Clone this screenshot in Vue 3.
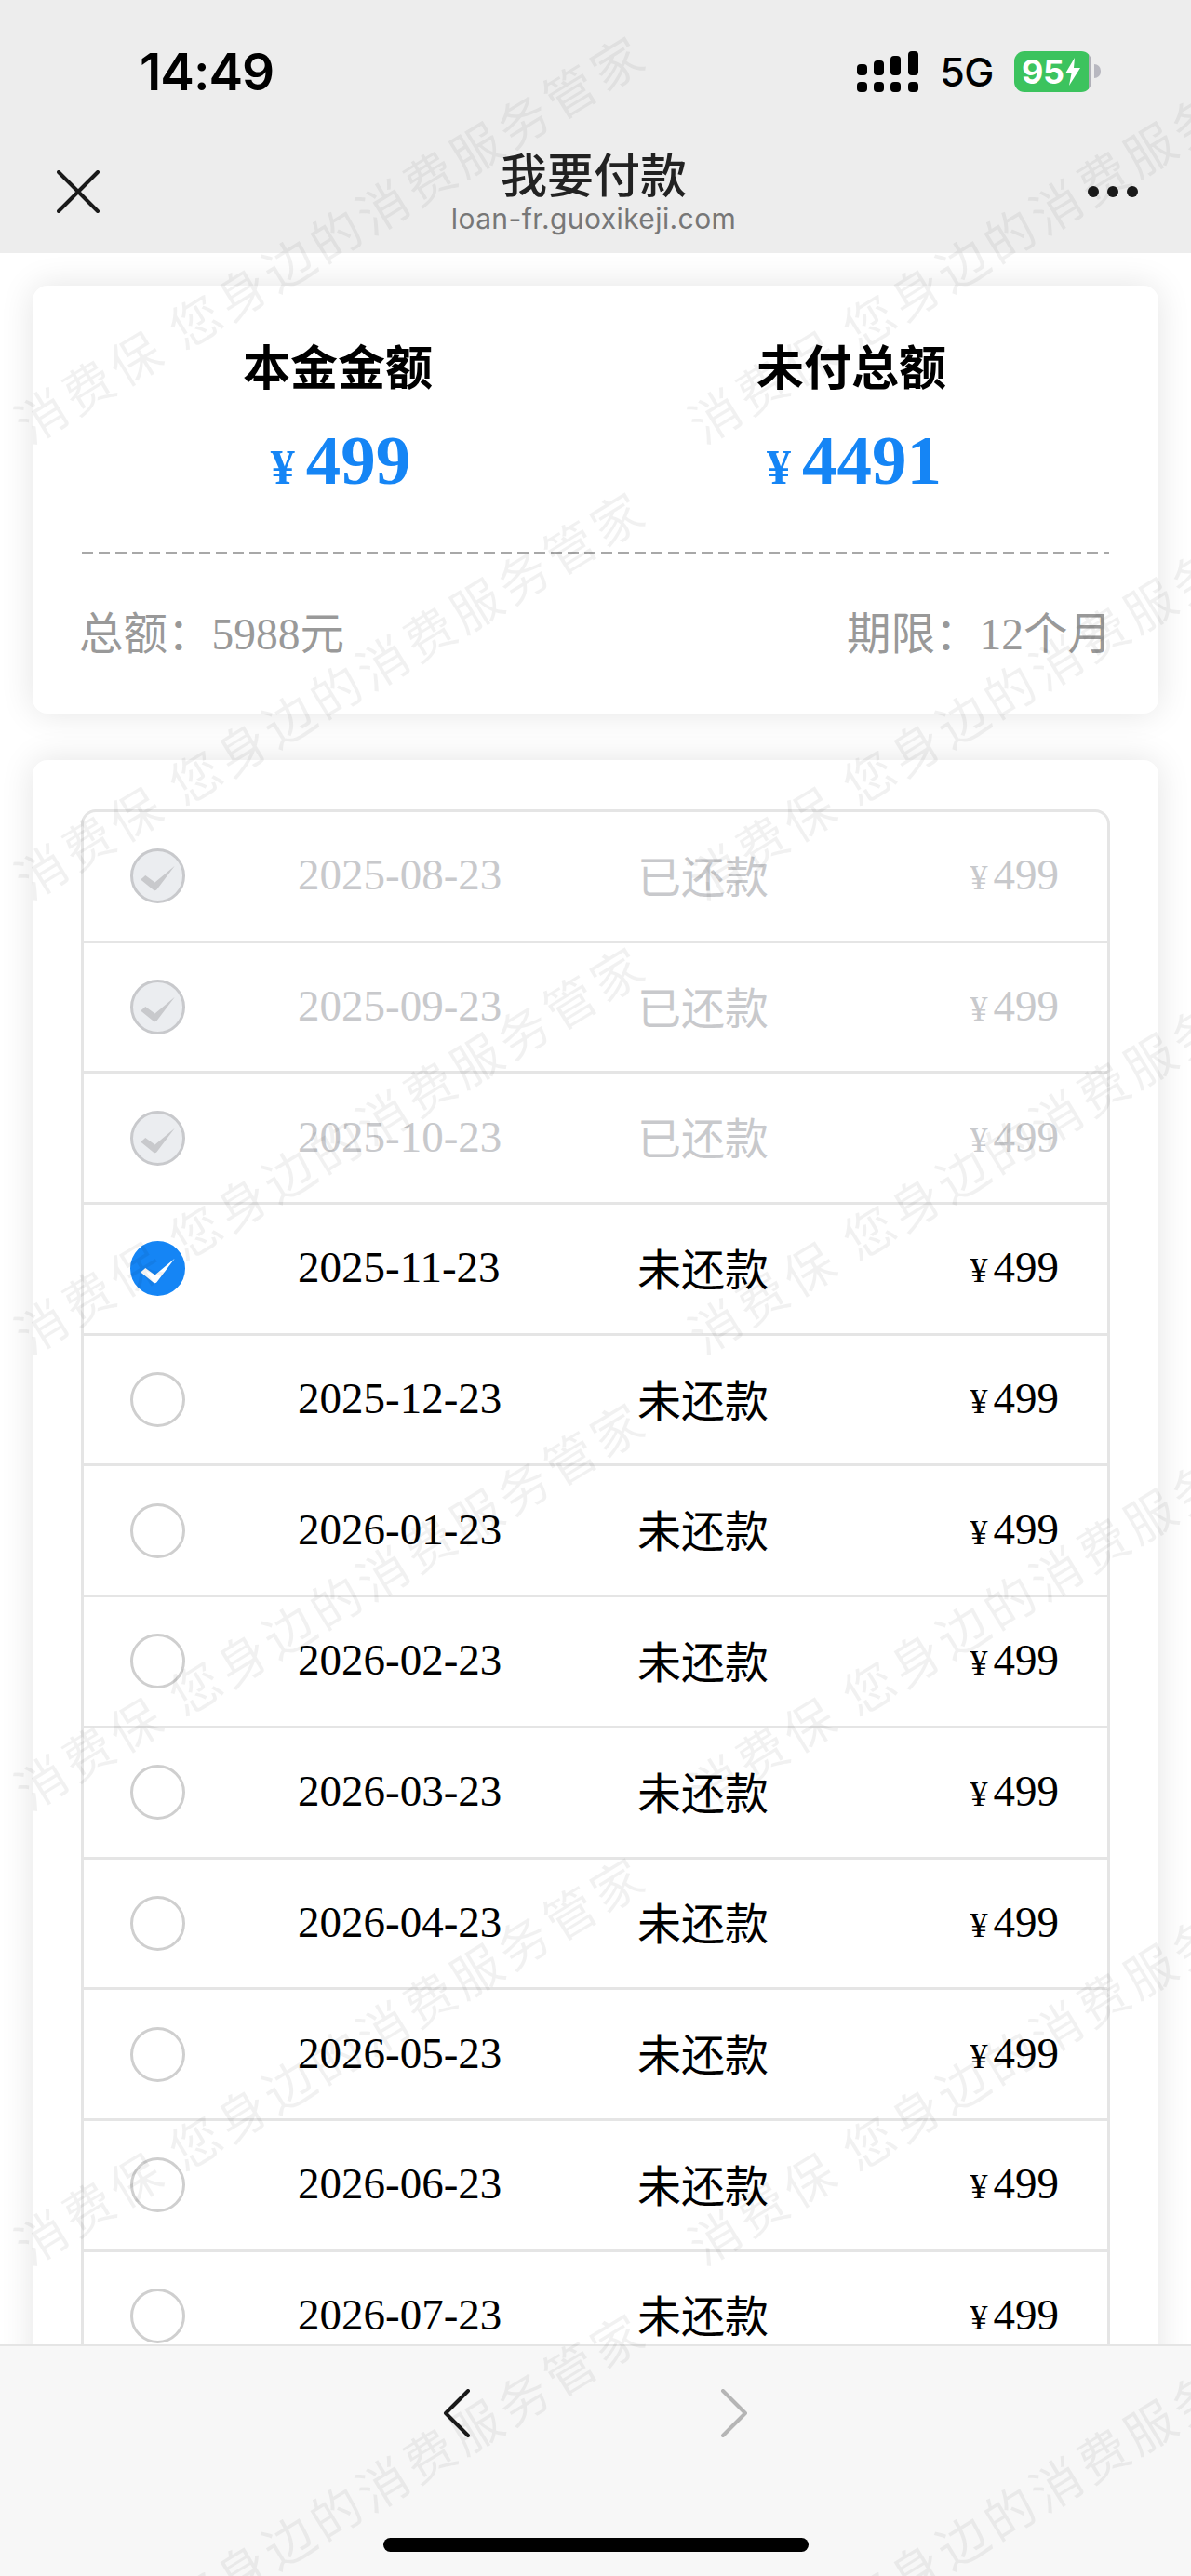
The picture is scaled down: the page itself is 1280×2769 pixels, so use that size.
<template>
  <div class="page">
    <header class="top">
      <div class="status">
        <span class="time">14:49</span>
        <div class="status-right">
          <svg class="signal" width="66" height="44" viewBox="0 0 66 44">
            <g fill="#000">
              <rect x="0" y="14" width="11" height="12" rx="4" />
              <rect x="18" y="10" width="11" height="16" rx="4" />
              <rect x="36" y="5" width="11" height="21" rx="4" />
              <rect x="55" y="0" width="11" height="26" rx="4" />
              <rect x="0" y="33" width="11" height="11" rx="4" />
              <rect x="18" y="33" width="11" height="11" rx="4" />
              <rect x="36" y="33" width="11" height="11" rx="4" />
              <rect x="55" y="33" width="11" height="11" rx="4" />
            </g>
          </svg>
          <span class="net">5G</span>
          <div class="battery">
            <span class="battery-num">95</span>
            <svg class="bolt" width="18" height="30" viewBox="0 0 18 30">
              <path d="M11 0 L1 17 H7.5 L5 30 L17 11 H10 Z" fill="#fff" />
            </svg>
          </div>
          <span class="battery-nub"></span>
        </div>
      </div>
      <div class="nav">
        <svg class="nav-close" width="46" height="46" viewBox="0 0 46 46">
          <path d="M2 2 L44 44 M44 2 L2 44" stroke="#1a1a1a" stroke-width="4" stroke-linecap="round" />
        </svg>
        <div class="nav-title">
          <div class="title">我要付款</div>
          <div class="domain">loan-fr.guoxikeji.com</div>
        </div>
        <div class="nav-more">
          <i></i><i></i><i></i>
        </div>
      </div>
    </header>

    <main class="content">
      <section class="card summary">
        <div class="amounts">
          <div class="amount" v-for="item in amounts" :key="item.label">
            <div class="amount-label">{{ item.label }}</div>
            <div class="amount-value"><span class="yen">¥</span>{{ item.value }}</div>
          </div>
        </div>
        <div class="dash"></div>
        <div class="meta">
          <span>总额：5988元</span>
          <span>期限：12个月</span>
        </div>
      </section>

      <section class="card plan">
        <div class="table">
          <div
            class="row"
            v-for="row in rows"
            :key="row.date"
            :class="{ paid: row.state === 'paid' }"
          >
            <span class="check" :class="row.state">
              <svg v-if="row.state !== 'empty'" width="59" height="59" viewBox="0 0 58 58">
                <path d="M11 33 L16 28.5 L26 36 L47 18.5 L28 43.5 Q26 45.5 24 43.5 Z" />
              </svg>
            </span>
            <span class="date">{{ row.date }}</span>
            <span class="state">{{ row.state === 'paid' ? '已还款' : '未还款' }}</span>
            <span class="price"><span class="price-yen">¥</span>499</span>
          </div>
        </div>
      </section>
    </main>

    <footer class="bottom">
      <div class="arrows">
        <svg width="30" height="52" viewBox="0 0 30 52">
          <path d="M27 2 L3 26 L27 50" fill="none" stroke="#1a1a1a" stroke-width="4" stroke-linecap="round" stroke-linejoin="round" />
        </svg>
        <svg width="30" height="52" viewBox="0 0 30 52">
          <path d="M3 2 L27 26 L3 50" fill="none" stroke="#b5b5b5" stroke-width="4" stroke-linecap="round" stroke-linejoin="round" />
        </svg>
      </div>
      <div class="home-bar"></div>
    </footer>

    <div class="watermarks">
      <span
        class="mark"
        v-for="mark in marks"
        :key="mark.id"
        :style="{ left: mark.x + 'px', top: mark.y + 'px' }"
      >消费保  您身边的消费服务管家</span>
    </div>
  </div>
</template>

<script setup>
const amounts = [
  { label: "本金金额", value: "499" },
  { label: "未付总额", value: "4491" },
];

const dates = [
  "2025-08-23",
  "2025-09-23",
  "2025-10-23",
  "2025-11-23",
  "2025-12-23",
  "2026-01-23",
  "2026-02-23",
  "2026-03-23",
  "2026-04-23",
  "2026-05-23",
  "2026-06-23",
  "2026-07-23",
];

const rows = dates.map((date, index) => ({
  date,
  state: index < 3 ? "paid" : index === 3 ? "active" : "empty",
}));

const marks = [];
for (let r = -1; r < 6; r++) {
  for (let c = -1; c < 3; c++) {
    marks.push({ id: r + "-" + c, x: 20 + c * 724, y: 432 + r * 489.5 });
  }
}
</script>

<style>
html,
body {
  margin: 0;
  background: #fff;
}
</style>

<style scoped>
.page {
  position: relative;
  width: 1280px;
  height: 2769px;
  display: flex;
  flex-direction: column;
  overflow: hidden;
  background: #fff;
  font-family: "Liberation Serif", "Noto Sans CJK SC", serif;
  color: #000;
}

.top {
  flex: none;
  height: 272px;
  background: #ededed;
  font-family: Inter, "Noto Sans CJK SC", sans-serif;
}

.status {
  height: 150px;
  box-sizing: border-box;
  padding: 3px 97px 0 150px;
  display: flex;
  justify-content: space-between;
  align-items: center;
}

.time {
  font-size: 55px;
  font-weight: 600;
  letter-spacing: -1px;
}

.status-right {
  display: flex;
  align-items: center;
}

.net {
  margin-left: 23px;
  font-size: 43px;
  font-weight: 500;
  letter-spacing: -0.5px;
}

.battery {
  margin-left: 22px;
  width: 83px;
  height: 44px;
  box-sizing: border-box;
  padding-left: 8px;
  border-radius: 11px;
  background: linear-gradient(90deg, #3cc35e 96%, #b0b0b8 96%);
  display: flex;
  align-items: center;
  color: #fff;
}

.battery-num {
  font-size: 36px;
  font-weight: 700;
  letter-spacing: -0.5px;
}

.bolt {
  margin-left: 1px;
}

.battery-nub {
  width: 7px;
  height: 15px;
  margin-left: 3px;
  border-radius: 0 8px 8px 0;
  background: #b8b8c0;
}

.nav {
  height: 122px;
  box-sizing: border-box;
  padding: 0 57px 0 61px;
  display: flex;
  justify-content: space-between;
  align-items: flex-start;
}

.nav-close {
  margin-top: 33px;
}

.nav-title {
  text-align: center;
}

.title {
  margin-top: 8px;
  font-size: 50px;
  line-height: 62px;
  font-weight: 500;
  color: #222;
}

.domain {
  margin-top: -3px;
  font-family: Inter, sans-serif;
  font-size: 30px;
  line-height: 36px;
  letter-spacing: 0.4px;
  color: #777;
}

.nav-more {
  margin-top: 50px;
  display: flex;
  gap: 9px;
}

.nav-more i {
  width: 12px;
  height: 12px;
  border-radius: 50%;
  background: #1a1a1a;
}

.content {
  flex: 1;
  min-height: 0;
  overflow: hidden;
  padding: 35px 35px 0;
}

.card {
  background: #fff;
  border-radius: 16px;
  box-shadow: 0 0 36px rgba(0, 0, 0, 0.11);
}

.summary {
  height: 460px;
  box-sizing: border-box;
  padding: 0 53px;
}

.amounts {
  display: grid;
  grid-template-columns: 1fr 1fr;
  padding-top: 51px;
}

.amount {
  text-align: center;
}

.amount-label {
  font-family: "Noto Sans CJK SC", sans-serif;
  font-size: 51px;
  line-height: 68px;
  font-weight: 700;
  margin-left: -2px;
}

.amount-value {
  margin-top: 27px;
  padding-left: 4px;
  font-size: 75px;
  line-height: 84px;
  font-weight: 700;
  color: #1585f5;
}

.yen {
  font-size: 52px;
  margin-right: 12px;
}

.dash {
  margin-top: 48px;
  height: 3px;
  background: repeating-linear-gradient(90deg, #a8a8a8 0 12px, transparent 12px 18px);
}

.meta {
  margin-top: 55px;
  display: flex;
  justify-content: space-between;
  font-size: 47.5px;
  line-height: 62px;
  color: #999;
  margin-left: -3px;
  margin-right: -3px;
}

.plan {
  height: 1800px;
  margin-top: 50px;
  box-sizing: border-box;
  padding: 53px 52px 0 51.5px;
}

.table {
  border: 3px solid #e5e5e5;
  border-radius: 16px;
}

.row {
  height: 140.7px;
  box-sizing: border-box;
  padding: 0 52px 0 50.5px;
  display: grid;
  grid-template-columns: 180px 365px 1fr auto;
  align-items: center;
  border-bottom: 3px solid #e5e5e5;
  font-size: 47px;
}

.row.paid {
  color: #c8c9cc;
}

.date,
.price {
  margin-bottom: 3px;
}

.state {
  margin-bottom: 5px;
}

.check {
  width: 59px;
  height: 59px;
  box-sizing: border-box;
  border-radius: 50%;
  border: 3px solid #cfcfcf;
  position: relative;
}

.check svg {
  position: absolute;
  left: -3px;
  top: -3px;
}

.check.paid {
  background: #ebedf0;
  border-color: #c8c9cc;
  fill: #c8c9cc;
}

.check.active {
  background: #1585f5;
  border-color: #1585f5;
  fill: #fff;
}

.price-yen {
  font-size: 38px;
  margin-right: 6px;
}

.bottom {
  position: absolute;
  left: 0;
  right: 0;
  bottom: 0;
  height: 249px;
  box-sizing: border-box;
  border-top: 2px solid #e5e5e5;
  background: #f7f7f7;
  display: flex;
  flex-direction: column;
  align-items: center;
}

.arrows {
  margin-top: 46px;
  width: 328px;
  display: flex;
  justify-content: space-between;
}

.home-bar {
  margin-top: 108px;
  width: 457px;
  height: 15px;
  border-radius: 8px;
  background: #000;
}

.watermarks {
  position: absolute;
  inset: 0;
  pointer-events: none;
}

.mark {
  position: absolute;
  font-family: "Noto Sans CJK SC", sans-serif;
  font-size: 54px;
  line-height: 54px;
  letter-spacing: 5px;
  white-space: pre;
  color: rgba(0, 0, 0, 0.055);
  transform-origin: 0 50%;
  transform: rotate(-31.5deg);
}
</style>
